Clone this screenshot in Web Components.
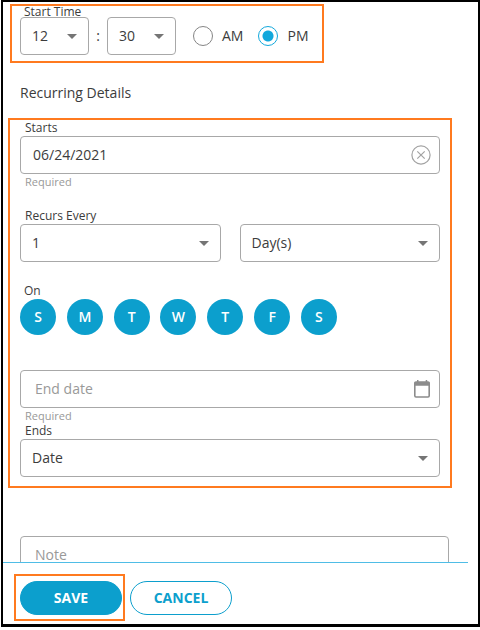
<!DOCTYPE html>
<html lang="en">
<head>
<meta charset="utf-8">
<meta name="viewport" content="width=device-width, initial-scale=1">
<title>Recurring schedule</title>
<style>
  body {
    margin: 0;
    background: #fff;
    color: #3c3c3c;
    font: 14px/20px "Open Sans", "Noto Sans", sans-serif;
    --accent: #0c9fcd;
    --line: #a8a8a8;
    --mark: #ff7a1f;
  }
</style>
</head>
<body>
<schedule-panel>
  <mark-box class="time"><time-field></time-field></mark-box>
  <h2>Recurring Details</h2>
  <mark-box class="details">
    <text-field label="Starts" value="06/24/2021" hint="Required" icon="clear"></text-field>
    <div class="pair">
      <select-field label="Recurs Every" value="1"></select-field>
      <select-field name="Recurrence unit" value="Day(s)"></select-field>
    </div>
    <day-picker label="On"></day-picker>
    <text-field class="end" placeholder="End date" hint="Required" icon="calendar"></text-field>
    <select-field class="ends" label="Ends" value="Date"></select-field>
  </mark-box>
  <text-field class="note" placeholder="Note"></text-field>
  <mark-box class="save" slot="actions"><pill-button filled>SAVE</pill-button></mark-box>
  <pill-button slot="actions">CANCEL</pill-button>
</schedule-panel>

<script>
const define = (name, render) => customElements.define(name, class extends HTMLElement {
  constructor() {
    super();
    this.attachShadow({ mode: 'open' });
  }
  connectedCallback() {
    this.shadowRoot.innerHTML = `<style>* { box-sizing: border-box; }</style>` + render(this);
  }
});

const arrow = `<svg width="10" height="5" viewBox="0 0 10 5" aria-hidden="true"><path d="M0 0H10L5 5Z" fill="#757575"/></svg>`;
const icons = {
  clear: `<button type="button" aria-label="Clear date"><svg width="20" height="20" viewBox="0 0 20 20" fill="none" stroke="#a3a3a3"><circle cx="10" cy="10" r="9.1" stroke-width="1.2"/><path d="M6.3 6.3L13.7 13.7M13.7 6.3L6.3 13.7" stroke-width="1.2"/></svg></button>`,
  calendar: `<button type="button" aria-label="Choose date"><svg width="18" height="20" viewBox="0 0 18 20"><rect x="1.8" y="3" width="14.4" height="15" rx="1.2" fill="none" stroke="#8c8c8c" stroke-width="1.6"/><path d="M1.5 3H16.5V6.7H1.5ZM4 1H5.5V4H4ZM12.7 1H14.2V4H12.7Z" fill="#8c8c8c"/></svg></button>`
};

define('schedule-panel', () => `
  <style>
    :host {
      display: flex; flex-direction: column; box-sizing: border-box;
      height: calc(100vh - 3px); margin-left: 1px;
      border: 2px solid #000; border-bottom-width: 3px;
    }
    main { flex: 1; min-height: 0; overflow: hidden; padding: 2px 26px 0 5px; }
    footer {
      display: flex; align-items: center; gap: 5px; flex: none;
      margin-right: 10px; padding: 11px 11px 3px; border-top: 1px solid #4fbde6;
    }
    ::slotted(h2) { margin: 20px 12px 15px; font-size: 14px; line-height: 20px; font-weight: 400; }
    ::slotted(.time) { width: fit-content; margin-left: 2px; padding: 0 14px 6px 8px; }
    ::slotted(.details) { padding: 0 10px 9px; }
    ::slotted(.note) { margin: 48px 3px 0 12px; }
    ::slotted(.save) { padding: 5px 1px 4px 4px; }
  </style>
  <main><slot></slot></main>
  <footer><slot name="actions"></slot></footer>`);

define('mark-box', () => `
  <style>
    :host { display: block; box-sizing: border-box; border: 2px solid var(--mark); }
    ::slotted(.pair) { display: grid; grid-template-columns: 1fr 1fr; align-items: end; gap: 19px; margin-top: 19px; }
    ::slotted(day-picker) { margin-top: 21px; }
    ::slotted(.end) { margin-top: 35px; }
  </style>
  <slot></slot>`);

define('select-field', el => {
  const label = el.getAttribute('label');
  const value = el.getAttribute('value');
  return `
  <style>
    :host { display: block; }
    label { display: block; padding-left: 5px; font-size: 12px; line-height: 16px; }
    .box { display: grid; align-items: center; }
    .box > * { grid-area: 1 / 1; }
    select {
      appearance: none; width: 100%; height: 38px; margin: 0; padding: 0 24px 0 11px;
      border: 1px solid var(--line); border-radius: 4px; background: #fff;
      font: inherit; color: inherit;
    }
    svg { justify-self: end; margin-right: 12px; pointer-events: none; }
  </style>
  ${label ? `<label for="s">${label}</label>` : ''}
  <div class="box">
    <select id="s" ${label ? '' : `aria-label="${el.getAttribute('name')}"`}><option>${value}</option></select>
    ${arrow}
  </div>`;
});

define('text-field', el => {
  const label = el.getAttribute('label');
  const hint = el.getAttribute('hint');
  const placeholder = el.getAttribute('placeholder') || '';
  return `
  <style>
    :host { display: block; }
    label { display: block; padding-left: 5px; font-size: 12px; line-height: 16px; }
    .box {
      display: flex; align-items: center; height: 38px; padding: 0 8px 0 12px;
      border: 1px solid var(--line); border-radius: 4px;
    }
    .box.empty { padding-left: 14px; }
    input {
      flex: 1; min-width: 0; padding: 0; border: 0; outline: 0; background: none;
      font: inherit; color: inherit;
    }
    input::placeholder { color: #999; opacity: 1; }
    button { display: flex; padding: 0; border: 0; background: none; }
    small { display: block; padding-left: 5px; font-size: 11px; line-height: 15px; color: #999; }
  </style>
  ${label ? `<label for="t">${label}</label>` : ''}
  <div class="box ${placeholder ? 'empty' : ''}">
    <input id="t" type="text" value="${el.getAttribute('value') || ''}" placeholder="${placeholder}"
      ${label ? '' : `aria-label="${placeholder}"`} ${hint ? 'aria-describedby="h"' : ''}>
    ${icons[el.getAttribute('icon')] || ''}
  </div>
  ${hint ? `<small id="h">${hint}</small>` : ''}`;
});

define('time-field', () => `
  <style>
    :host { display: block; }
    fieldset { margin: 0; padding: 0; border: 0; }
    legend { padding: 0 0 0 4px; font-size: 12px; line-height: 11px; }
    .row { display: flex; align-items: center; }
    select-field { width: 69px; }
    .colon { width: 18px; text-align: center; }
    radio-option { margin-left: 17px; }
    radio-option + radio-option { margin-left: 15px; }
  </style>
  <fieldset>
    <legend>Start Time</legend>
    <div class="row">
      <select-field name="Hour" value="12"></select-field>
      <span class="colon">:</span>
      <select-field name="Minute" value="30"></select-field>
      <radio-option>AM</radio-option>
      <radio-option checked>PM</radio-option>
    </div>
  </fieldset>`);

define('radio-option', el => `
  <style>
    :host { display: block; }
    label { display: flex; align-items: center; gap: 9px; }
    input {
      appearance: none; width: 20px; height: 20px; margin: 0;
      border: 1px solid #858585; border-radius: 50%;
    }
    input:checked {
      border-color: #12a8dc;
      background: radial-gradient(circle, #12a8dc 5px, transparent 6px);
    }
  </style>
  <label><input type="radio" ${el.hasAttribute('checked') ? 'checked' : ''}><slot></slot></label>`);

define('day-picker', el => `
  <style>
    :host { display: block; }
    .label { padding-left: 4px; font-size: 12px; line-height: 16px; }
    .days { display: flex; justify-content: space-between; max-width: 317px; }
    button {
      width: 36px; height: 36px; padding: 0; border: 0; border-radius: 50%;
      background: var(--accent); color: #fff; font: inherit; font-weight: 600;
    }
  </style>
  <div class="label" id="l">${el.getAttribute('label')}</div>
  <div class="days" role="group" aria-labelledby="l">
    ${['S', 'M', 'T', 'W', 'T', 'F', 'S'].map(d => `<button type="button" aria-pressed="true">${d}</button>`).join('')}
  </div>`);

define('pill-button', () => `
  <style>
    :host { display: block; }
    button {
      display: block; width: 102px; height: 34px; padding: 0;
      border: 1px solid var(--accent); border-radius: 17px;
      background: #fff; color: var(--accent); font: inherit; font-weight: 700;
    }
    :host([filled]) button { background: var(--accent); color: #fff; }
  </style>
  <button type="button"><slot></slot></button>`);
</script>
</body>
</html>
